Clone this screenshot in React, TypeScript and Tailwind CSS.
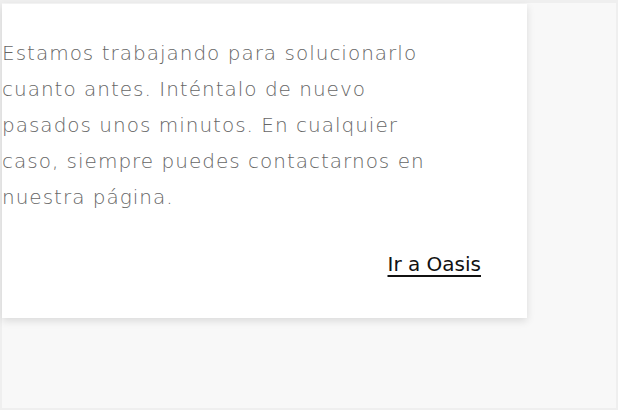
import React from 'react';

const lines = [
  'Estamos trabajando para solucionarlo',
  'cuanto antes. Inténtalo de nuevo',
  'pasados unos minutos. En cualquier',
  'caso, siempre puedes contactarnos en',
  'nuestra página.',
];

const App: React.FC = () => {
  return (
    <div className="w-[618px] h-[410px] bg-[#efefef] pt-[3px] pl-[2px] pr-[2px] pb-[2px]">
      <div className="h-full bg-[#f8f8f8] pt-px">
        <div className="w-[525px] bg-white shadow-[0_3px_8px_rgba(0,0,0,0.12)] pt-[31px] pb-[36px] pr-[46px] font-['DejaVu_Sans',sans-serif]">
          <p className="text-[20px] leading-[36px] font-extralight text-[#666] tracking-[1px]">
            {lines.map((l, i) => (
              <React.Fragment key={i}>
                {l}
                {i < lines.length - 1 && <br />}
              </React.Fragment>
            ))}
          </p>
          <div className="mt-[31px] flex justify-end">
            <a href="#" className="text-[20px] leading-[36px] font-normal text-[#111] underline decoration-2 underline-offset-[4px]">
              Ir a Oasis
            </a>
          </div>
        </div>
      </div>
    </div>
  );
};

export default App;
